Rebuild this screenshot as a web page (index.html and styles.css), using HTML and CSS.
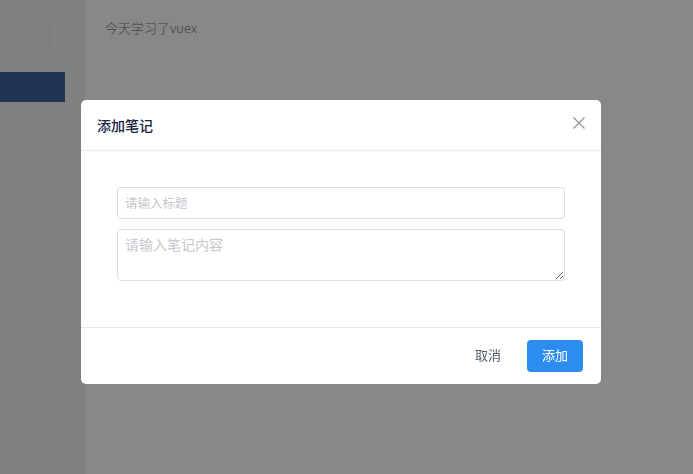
FILE: index.html
```html
<!DOCTYPE html>
<html lang="zh">
<head>
<meta charset="utf-8">
<title>笔记</title>
<link rel="stylesheet" href="styles.css">
</head>
<body>
<div class="app">
  <aside class="sidebar">
    <div class="side-input"></div>
    <div class="side-active"></div>
  </aside>
  <main class="main">
    <p class="note">今天学习了vuex</p>
  </main>
</div>
<div class="mask">
  <div class="dialog">
    <div class="dialog-header">
      <span class="dialog-title">添加笔记</span>
      <svg class="close" width="12" height="12" viewBox="0 0 12 12"><path d="M0.5 0.5 L11.5 11.5 M11.5 0.5 L0.5 11.5" stroke="#909399" stroke-width="1.2" fill="none"/></svg>
    </div>
    <div class="dialog-body">
      <input class="field" type="text" placeholder="请输入标题">
      <textarea class="area" placeholder="请输入笔记内容"></textarea>
    </div>
    <div class="dialog-footer">
      <button class="btn btn-text">取消</button>
      <button class="btn btn-primary">添加</button>
    </div>
  </div>
</div>
</body>
</html>
```
FILE: styles.css
```css
* { box-sizing: border-box; }
html, body { margin: 0; height: 100%; }
body {
  font-family: "Noto Sans CJK SC", "Liberation Sans", sans-serif;
  background: #fff;
  overflow: hidden;
}
.app {
  display: flex;
  height: 100%;
}
.sidebar {
  width: 85px;
  background: #f0f0f0;
  padding-top: 20px;
  display: flex;
  flex-direction: column;
}
.side-input {
  width: 50px;
  height: 32px;
  border: 1px solid #e6e6e6;
  border-left: none;
  border-radius: 0 4px 4px 0;
  background: #f0f0f0;
}
.side-active {
  margin-top: 20px;
  width: 65px;
  height: 30px;
  background: #41629f;
}
.main {
  flex: 1;
  background: #fff;
  padding: 19px 0 0 20px;
}
.note {
  margin: 0;
  font-size: 13px;
  line-height: 18px;
  font-weight: 300;
  color: #777;
}
.mask {
  position: fixed;
  inset: 0;
  background: rgba(0, 0, 0, 0.467);
  padding: 100px 0 0 81px;
}
.dialog {
  width: 520px;
  background: #fff;
  border-radius: 5px;
  display: flex;
  flex-direction: column;
}
.dialog-header {
  height: 51px;
  border-bottom: 1px solid #e8eaec;
  display: flex;
  align-items: center;
  justify-content: space-between;
  padding: 0 16px 0 16px;
}
.dialog-title {
  font-size: 14px;
  font-weight: 500;
  color: #17233d;
}
.close { margin-top: -4px; }
.dialog-body {
  padding: 36px 36px 46px 36px;
  display: flex;
  flex-direction: column;
  gap: 10px;
}
.field, .area {
  width: 100%;
  border: 1px solid #dcdee2;
  border-radius: 4px;
  font-family: "Noto Sans CJK SC", "Liberation Sans", sans-serif;
  color: #515a6e;
  outline: none;
  background: #fff;
  margin: 0;
}
.field {
  height: 32px;
  padding: 0 7px 2px 7px;
  font-size: 12.5px;
}
.area {
  height: 52px;
  padding: 4px 7px;
  font-size: 14px;
  line-height: 20px;
  resize: vertical;
  display: block;
}
.field::placeholder, .area::placeholder { color: #c5c8ce; }
.dialog-footer {
  border-top: 1px solid #e8eaec;
  padding: 12px 18px 12px 18px;
  display: flex;
  justify-content: flex-end;
  gap: 11px;
}
.btn {
  width: 56px;
  height: 32px;
  border: none;
  border-radius: 4px;
  font-family: "Noto Sans CJK SC", "Liberation Sans", sans-serif;
  font-size: 13px;
  padding: 0 0 3px 0;
  cursor: pointer;
}
.btn-text {
  background: transparent;
  color: #515a6e;
}
.btn-primary {
  background: #2d8cf0;
  color: #fff;
}
```
